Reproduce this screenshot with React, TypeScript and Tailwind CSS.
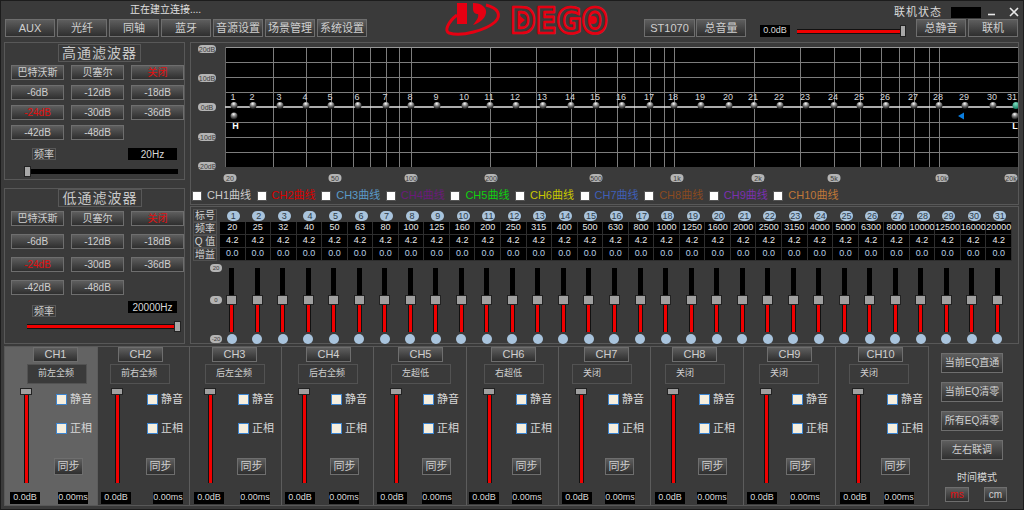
import React from 'react';

const btnBase =
  'flex items-center justify-center border border-[#6e6e6e] bg-linear-to-b from-[#5e5e5e] to-[#2f2f2f] text-[#cfcfcf] whitespace-nowrap leading-none';

const Btn: React.FC<{ className?: string; children: React.ReactNode }> = ({ className = '', children }) => (
  <button className={`${btnBase} ${className}`}>{children}</button>
);

const FREQS = [20, 25, 32, 40, 50, 63, 80, 100, 125, 160, 200, 250, 315, 400, 500, 630, 800, 1000, 1250, 1600, 2000, 2500, 3150, 4000, 5000, 6300, 8000, 10000, 12500, 16000, 20000];
const NODE_X = [234, 253, 280, 306, 331, 358, 386, 411, 437, 465, 490, 516, 543, 571, 596, 622, 650, 674, 701, 729, 754, 780, 806, 834, 860, 886, 914, 939, 965, 993, 1016];
const GRID_X = [273, 306, 331, 353, 370, 386, 399, 411, 490, 536, 571, 595, 617, 634, 650, 664, 674, 754, 800, 834, 860, 881, 899, 914, 929, 939];
const GRID_Y = [62, 77, 92, 122, 137, 152];

const CURVES = [
  { name: 'CH1曲线', color: 'text-[#cccccc]' },
  { name: 'CH2曲线', color: 'text-[#d80000]' },
  { name: 'CH3曲线', color: 'text-[#5a9bc8]' },
  { name: 'CH4曲线', color: 'text-[#6a1a7a]' },
  { name: 'CH5曲线', color: 'text-[#10d010]' },
  { name: 'CH6曲线', color: 'text-[#c8c800]' },
  { name: 'CH7曲线', color: 'text-[#3f5fb8]' },
  { name: 'CH8曲线', color: 'text-[#8a4a20]' },
  { name: 'CH9曲线', color: 'text-[#7a30b0]' },
  { name: 'CH10曲线', color: 'text-[#c07838]' },
];

const CHANNELS = [
  { name: 'CH1', label: '前左全频', w: 'w-[93px] bg-[#636363]', btn: 'ml-[28px]', lab: 'ml-[22px] bg-[#3a3a3a]', col: 'w-[51px] pl-[15px]', sync: '-ml-[2px]', db: 'ml-[5px]', ms: 'ml-[18px]' },
  { name: 'CH2', label: '前右全频', w: 'w-[92px]', btn: 'ml-[20px]', lab: 'ml-[12px]', col: 'w-[49px] pl-[13px]', sync: '-ml-[1px]', db: 'ml-[3px]', ms: 'ml-[22px]' },
  { name: 'CH3', label: '后左全频', w: 'w-[92px]', btn: 'ml-[22px]', lab: 'ml-[15px]', col: 'w-[48px] pl-[14px]', sync: '-ml-[1px]', db: 'ml-[4px]', ms: 'ml-[16px]' },
  { name: 'CH4', label: '后右全频', w: 'w-[92px]', btn: 'ml-[24px]', lab: 'ml-[16px]', col: 'w-[49px] pl-[16px]', sync: '-ml-[1px]', db: 'ml-[3px]', ms: 'ml-[14px]' },
  { name: 'CH5', label: '左超低', w: 'w-[93px]', btn: 'ml-[24px]', lab: 'ml-[17px]', col: 'w-[49px] pl-[16px]', sync: '-ml-[1px]', db: 'ml-[3px]', ms: 'ml-[15px]' },
  { name: 'CH6', label: '右超低', w: 'w-[92px]', btn: 'ml-[24px]', lab: 'ml-[17px]', col: 'w-[49px] pl-[16px]', sync: '-ml-[4px]', db: 'ml-[2px]', ms: 'ml-[13px]' },
  { name: 'CH7', label: '关闭', w: 'w-[92px]', btn: 'ml-[25px]', lab: 'ml-[13px]', col: 'w-[49px] pl-[16px]', sync: '-ml-[3px]', db: 'ml-[3px]', ms: 'ml-[13px]' },
  { name: 'CH8', label: '关闭', w: 'w-[93px]', btn: 'ml-[21px]', lab: 'ml-[14px]', col: 'w-[48px] pl-[16px]', sync: '-ml-[1px]', db: 'ml-[4px]', ms: 'ml-[12px]' },
  { name: 'CH9', label: '关闭', w: 'w-[92px]', btn: 'ml-[23px]', lab: 'ml-[15px]', col: 'w-[48px] pl-[16px]', sync: '-ml-[6px]', db: 'ml-[3px]', ms: 'ml-[13px]' },
  { name: 'CH10', label: '关闭', w: 'w-[92px]', btn: 'ml-[22px]', lab: 'ml-[13px]', col: 'w-[51px] pl-[16px]', sync: '-ml-[6px]', db: 'ml-[4px]', ms: 'ml-[14px]' },
];

const Logo = () => (
  <svg width="166" height="40" viewBox="443 2 166 40" className="ml-[76px] mt-[1px] shrink-0">
    <rect x="457" y="3" width="10" height="21" fill="#e60012" />
    <path d="M473 3 C482 3 487 8 486 13 C485 19 479 23 473 25 C477 20 479 17 478 14 C475 14 473 12 473 9 Z" fill="#e60012" />
    <path d="M457 15 C448 22 444 31 449 33 C462 37 486 30 495 22 C502 15 498 8 486 5" fill="none" stroke="#e60012" strokeWidth="3" />
    <text transform="translate(510 32.5) scale(1.04 1.18)" fontFamily="'DejaVu Sans', sans-serif" fontWeight="900" fontSize="29.5" fill="#3a3a3a" stroke="#e60012" strokeWidth="2.2" strokeLinejoin="round">
      DEGO
    </text>
    <circle cx="593" cy="20" r="4" fill="#e60012" />
    <path d="M519 15 L525 20 L519 25 Z" fill="#e60012" />
  </svg>
);

const Pill = ({ x, y, t, w = 18 }: { x: number; y: number; t: string; w?: number }) => (
  <g>
    <rect x={x - w / 2} y={y - 4} width={w} height="8" rx="4" fill="#b4b4b4" />
    <text x={x} y={y + 2.5} fontSize="7" textAnchor="middle" fill="#3c3c3c">{t}</text>
  </g>
);

const Node = ({ x, y, id }: { x: number; y: number; id: string }) => (
  <circle cx={x} cy={y} r="3.5" fill={`url(#${id})`} />
);

const EqGraph = () => (
  <svg width="827" height="144" viewBox="191 43 827 144" className="shrink-0 font-['Liberation_Sans',sans-serif]">
    <defs>
      <radialGradient id="ball" cx="45%" cy="25%" r="75%">
        <stop offset="0%" stopColor="#ffffff" />
        <stop offset="40%" stopColor="#8a8a8a" />
        <stop offset="100%" stopColor="#0c0c0c" />
      </radialGradient>
      <radialGradient id="ballGreen" cx="45%" cy="25%" r="75%">
        <stop offset="0%" stopColor="#7fe0c0" />
        <stop offset="100%" stopColor="#117a60" />
      </radialGradient>
    </defs>
    <rect x="225" y="47" width="793" height="120" fill="#000" />
    {GRID_X.map(x => (
      <line key={x} x1={x + 0.5} x2={x + 0.5} y1="47" y2="167" stroke="#7c7c7c" />
    ))}
    {GRID_Y.map(y => (
      <line key={y} x1="225" x2="1018" y1={y + 0.5} y2={y + 0.5} stroke="#7c7c7c" />
    ))}
    <line x1="225" x2="1018" y1="47.5" y2="47.5" stroke="#969696" />
    <line x1="225.5" x2="225.5" y1="47" y2="167" stroke="#666" />
    <line x1="225" x2="1018" y1="107" y2="107" stroke="#e6e6e6" strokeWidth="1.5" />
    {NODE_X.map((x, i) => (
      <g key={x}>
        <text x={i === 30 ? 1012 : x - 1} y="100" fontSize="9" textAnchor="middle" fill="#d8d8d8">{i + 1}</text>
        <Node x={x} y={105.5} id={i === 30 ? 'ballGreen' : 'ball'} />
      </g>
    ))}
    <Node x={234} y={116} id="ball" />
    <text x="235.5" y="129" fontSize="9" fontWeight="bold" textAnchor="middle" fill="#fff">H</text>
    <Node x={1015} y={116} id="ball" />
    <text x="1015" y="129" fontSize="9" fontWeight="bold" textAnchor="middle" fill="#fff">L</text>
    <path d="M958 116 L964 112.5 L964 119.5 Z" fill="#0a7ee0" />
    <Pill x={207} y={49} t="20dB" />
    <Pill x={207} y={78} t="10dB" />
    <Pill x={207} y={107} t="0dB" />
    <Pill x={207} y={137} t="-10dB" />
    <Pill x={207} y={166} t="-20dB" />
    {[
      [230, '20'], [335, '50'], [411, '100'], [491, '200'], [596, '500'],
      [677, '1k'], [758, '2k'], [834, '5k'], [942, '10k'], [1011, '20k'],
    ].map(([x, t]) => (
      <Pill key={t} x={x as number} y={178} t={t as string} w={13} />
    ))}
  </svg>
);

const FilterGrid = ({ rowGap }: { rowGap: string }) => {
  const items = ['巴特沃斯', '贝塞尔', '关闭', '-6dB', '-12dB', '-18dB', '-24dB', '-30dB', '-36dB', '-42dB', '-48dB'];
  return (
    <div className={`grid grid-cols-[53px_53px_53px] gap-x-[7px] ${rowGap} ml-[6px]`}>
      {items.map(t => (
        <Btn key={t} className={`h-[15px] text-[10px] ${t === '关闭' || t === '-24dB' ? 'text-[#e01010]' : ''}`}>{t}</Btn>
      ))}
    </div>
  );
};

const Check = ({ label }: { label: string }) => (
  <div className="flex items-center h-[10px]">
    <span className="w-[11px] h-[11px] bg-[#f6efdf] border border-[#3f86d0] shrink-0" />
    <span className="ml-[3px] text-[11px] text-[#d8d8d8] whitespace-nowrap">{label}</span>
  </div>
);

const Channel = ({ ch }: { ch: (typeof CHANNELS)[number] }) => (
  <div className={`${ch.w} h-full flex flex-col border-r border-[#5c5c5c] shrink-0 last:border-r-0`}>
    <Btn className={`${ch.btn} w-[45px] h-[15px] text-[11px]`}>{ch.name}</Btn>
    <div className={`${ch.lab} mt-[2px] w-[60px] h-[20px] pl-[10px] flex items-center border border-[#525252] text-[9px] text-[#d0d0d0]`}>{ch.label}</div>
    <div className="flex mt-[4px] h-[95px]">
      <div className={`${ch.col} shrink-0`}>
        <div className="w-[12px] flex flex-col items-center">
          <div className="w-[12px] h-[7px] bg-[#a0a0a0] border border-[#222]" />
          <div className="w-[5px] h-[88px] bg-[#f00000] border-x border-[#111]" />
        </div>
      </div>
      <div className="flex flex-col pt-[6px]">
        <Check label="静音" />
        <div className="mt-[19px]"><Check label="正相" /></div>
        <Btn className={`${ch.sync} mt-[25px] w-[29px] h-[17px] text-[11px]`}>同步</Btn>
      </div>
    </div>
    <div className="flex mt-[9px]">
      <div className={`${ch.db} w-[30px] h-[12px] bg-black text-[9px] text-[#d8d8d8] flex items-center justify-center`}>0.0dB</div>
      <div className={`${ch.ms} w-[30px] h-[12px] bg-black text-[9px] text-[#d8d8d8] flex items-center justify-center`}>0.00ms</div>
    </div>
  </div>
);

const TableLabel = ({ children }: { children: React.ReactNode }) => (
  <div className="w-[24px] ml-[2px] h-[13px] flex items-center justify-center border border-[#505050] text-[10px] text-[#cfcfcf] shrink-0">{children}</div>
);

const Cell = ({ children, color }: { children: React.ReactNode; color: string }) => (
  <div className={`w-[25.55px] h-full bg-black border-r border-b border-[#2e2e2e] flex items-center justify-center text-[9px] ${color} shrink-0`}>{children}</div>
);

export default function App() {
  return (
    <div className="w-[1024px] h-[510px] box-border border border-[#1c1c1c] bg-[#3a3a3a] flex flex-col overflow-hidden font-['Liberation_Sans','Noto_Sans_CJK_SC',sans-serif]">
      {/* Header */}
      <div className="h-[41px] flex shrink-0">
        <div className="ml-[4px] w-[362px] shrink-0">
          <div className="h-[18px] pl-[125px] pt-[2px] text-[10px] text-[#e0e0e0] leading-[14px]">正在建立连接....</div>
          <div className="flex gap-[2px]">
            {['AUX', '光纤', '同轴', '蓝牙', '音源设置', '场景管理', '系统设置'].map(t => (
              <Btn key={t} className="w-[50px] h-[18px] text-[11px]">{t}</Btn>
            ))}
          </div>
        </div>
        <Logo />
        <div className="ml-[35px] mt-[18px] flex gap-[1px] shrink-0">
          <Btn className="w-[51px] h-[18px] text-[11px]">ST1070</Btn>
          <Btn className="w-[50px] h-[18px] text-[11px]">总音量</Btn>
        </div>
        <div className="ml-[14px] mt-[24px] w-[30px] h-[12px] bg-black text-[9px] text-[#d8d8d8] flex items-center justify-center shrink-0">0.0dB</div>
        <div className="ml-[7px] mt-[24px] h-[12px] flex items-center shrink-0">
          <div className="w-[103px] h-[5px] bg-[#f00000] border-y border-[#111]" />
          <div className="w-[6px] h-[12px] bg-[#a8a8a8] border border-[#222]" />
        </div>
        <div className="ml-[10px] w-[104px] flex flex-col shrink-0 relative">
          <div className="h-[18px] flex">
            <span className="-ml-[22px] mt-[4px] text-[11px] leading-[14px] tracking-[1px] text-[#d8d8d8] whitespace-nowrap">联机状态</span>
            <span className="ml-[9px] mt-[6px] w-[30px] h-[11px] bg-black shrink-0" />
            <svg width="36" height="14" viewBox="0 0 36 14" className="ml-[5px] mt-[5px] shrink-0" stroke="#e8e8e8" strokeWidth="1.6" fill="none">
              <path d="M2 8.5H9" />
              <path d="M24 2L32 10M32 2L24 10" />
            </svg>
          </div>
          <div className="flex gap-[2px]">
            <Btn className="w-[50px] h-[18px] text-[11px]">总静音</Btn>
            <Btn className="w-[50px] h-[18px] text-[11px]">联机</Btn>
          </div>
        </div>
      </div>

      {/* Main */}
      <div className="h-[302px] flex shrink-0">
        <div className="ml-[3px] w-[181px] shrink-0 flex flex-col">
          <div className="h-[138px] border border-[#585858] flex flex-col">
            <div className="mt-[1px] ml-[53px] w-[83px] h-[18px] border border-[#585858] flex items-center justify-center text-[14px] tracking-[1px] text-[#c8c8c8] whitespace-nowrap">高通滤波器</div>
            <div className="mt-[3px]"><FilterGrid rowGap="gap-y-[5px]" /></div>
            <div className="mt-[8px] flex">
              <div className="ml-[27px] w-[24px] h-[12px] border border-[#585858] flex items-center justify-center text-[10px] text-[#cfcfcf]">频率</div>
              <div className="ml-[72px] w-[49px] h-[12px] bg-black flex items-center justify-center text-[10px] text-[#d8d8d8]">20Hz</div>
            </div>
            <div className="mt-[6px] ml-[19px] flex items-center h-[11px]">
              <div className="w-[7px] h-[11px] bg-[#a8a8a8] border border-[#222] shrink-0" />
              <div className="w-[147px] h-[5px] bg-black" />
            </div>
          </div>
          <div className="mt-[8px] h-[156px] border border-[#585858] flex flex-col">
            <div className="ml-[53px] w-[84px] h-[18px] border border-[#585858] flex items-center justify-center text-[14px] tracking-[1px] text-[#c8c8c8] whitespace-nowrap">低通滤波器</div>
            <div className="mt-[4px]"><FilterGrid rowGap="gap-y-[8px]" /></div>
            <div className="mt-[6px] flex">
              <div className="ml-[27px] mt-[4px] w-[24px] h-[12px] border border-[#585858] flex items-center justify-center text-[10px] text-[#cfcfcf]">频率</div>
              <div className="ml-[72px] w-[49px] h-[12px] bg-black flex items-center justify-center text-[10px] text-[#d8d8d8]">20000Hz</div>
            </div>
            <div className="mt-[4px] ml-[22px] flex items-center h-[11px]">
              <div className="w-[147px] h-[5px] bg-[#f00000] border-y border-[#111]" />
              <div className="w-[7px] h-[11px] bg-[#a8a8a8] border border-[#222] shrink-0" />
            </div>
          </div>
        </div>

        <div className="ml-[5px] w-[829px] shrink-0 flex flex-col">
          <div className="h-[163px] border border-[#585858] flex flex-col">
            <EqGraph />
            <div className="h-[18px] pl-[1px] flex items-center">
              {CURVES.map(c => (
                <div key={c.name} className="w-[64.6px] shrink-0 flex items-center">
                  <span className="w-[10px] h-[10px] bg-white border border-[#555] shrink-0" />
                  <span className={`ml-[5px] text-[11px] whitespace-nowrap ${c.color}`}>{c.name}</span>
                </div>
              ))}
            </div>
          </div>
          <div className="mt-[1px] h-[138px] border border-[#585858] pt-[2px]">
            <div className="flex h-[13px]">
              <TableLabel>标号</TableLabel>
              <div className="ml-[3px] flex">
                {FREQS.map((_, i) => (
                  <div key={i} className="w-[25.55px] flex items-center justify-center shrink-0">
                    <span className="ml-[1px] w-[13px] h-[10px] rounded-full bg-[#a9c4dd] text-[9px] leading-[10px] text-center text-[#2c3a48]">{i + 1}</span>
                  </div>
                ))}
              </div>
            </div>
            {[
              { label: '频率', vals: FREQS.map(String), color: 'text-[#e8e8e8]' },
              { label: 'Q 值', vals: FREQS.map(() => '4.2'), color: 'text-[#e8e8e8]' },
              { label: '增益', vals: FREQS.map(() => '0.0'), color: 'text-[#b8d0e6]' },
            ].map(row => (
              <div key={row.label} className="flex h-[13px]">
                <TableLabel>{row.label}</TableLabel>
                <div className="ml-[3px] flex">
                  {row.vals.map((v, i) => <Cell key={i} color={row.color}>{v}</Cell>)}
                </div>
              </div>
            ))}
            <div className="flex mt-[7px]">
              <div className="w-[28px] shrink-0 flex flex-col">
                <span className="ml-[19px] -mt-[4px] w-[12px] h-[8px] rounded-full bg-[#b4b4b4] text-[6px] leading-[8px] text-center text-[#3c3c3c]">20</span>
                <span className="ml-[19px] mt-[24px] w-[12px] h-[8px] rounded-full bg-[#b4b4b4] text-[6px] leading-[8px] text-center text-[#3c3c3c]">0</span>
                <span className="ml-[19px] mt-[31px] w-[12px] h-[8px] rounded-full bg-[#b4b4b4] text-[6px] leading-[8px] text-center text-[#3c3c3c]">-20</span>
              </div>
              <div className="flex">
                {FREQS.map((_, i) => (
                  <div key={i} className="w-[25.53px] shrink-0 flex flex-col items-center">
                    <div className="w-[5px] h-[27px] bg-black" />
                    <div className="w-[11px] h-[10px] bg-[#a0a0a0] border border-[#222]" />
                    <div className="w-[5px] h-[27px] bg-[#f00000] border-x border-[#111]" />
                    <div className="mt-[2px] w-[10px] h-[10px] rounded-full bg-[#a9c4dd]" />
                  </div>
                ))}
              </div>
            </div>
          </div>
        </div>
      </div>

      {/* Channels */}
      <div className="mt-[2px] h-[160px] flex shrink-0">
        <div className="ml-[3px] h-full flex border border-[#585858] shrink-0">
          {CHANNELS.map(ch => <Channel key={ch.name} ch={ch} />)}
        </div>
        <div className="ml-[12px] w-[66px] flex flex-col shrink-0">
          <div className="mt-[7px] flex flex-col gap-[9px]">
            {['当前EQ直通', '当前EQ清零', '所有EQ清零', '左右联调'].map(t => (
              <Btn key={t} className="w-[62px] h-[20px] text-[10px]">{t}</Btn>
            ))}
          </div>
          <div className="mt-[11px] ml-[16px] text-[10px] leading-[14px] text-[#d8d8d8] whitespace-nowrap">时间模式</div>
          <div className="mt-[2px] ml-[4px] flex gap-[15px]">
            <Btn className="w-[24px] h-[15px] text-[10px] text-[#e01010]">ms</Btn>
            <Btn className="w-[23px] h-[15px] text-[10px]">cm</Btn>
          </div>
        </div>
      </div>
    </div>
  );
}
